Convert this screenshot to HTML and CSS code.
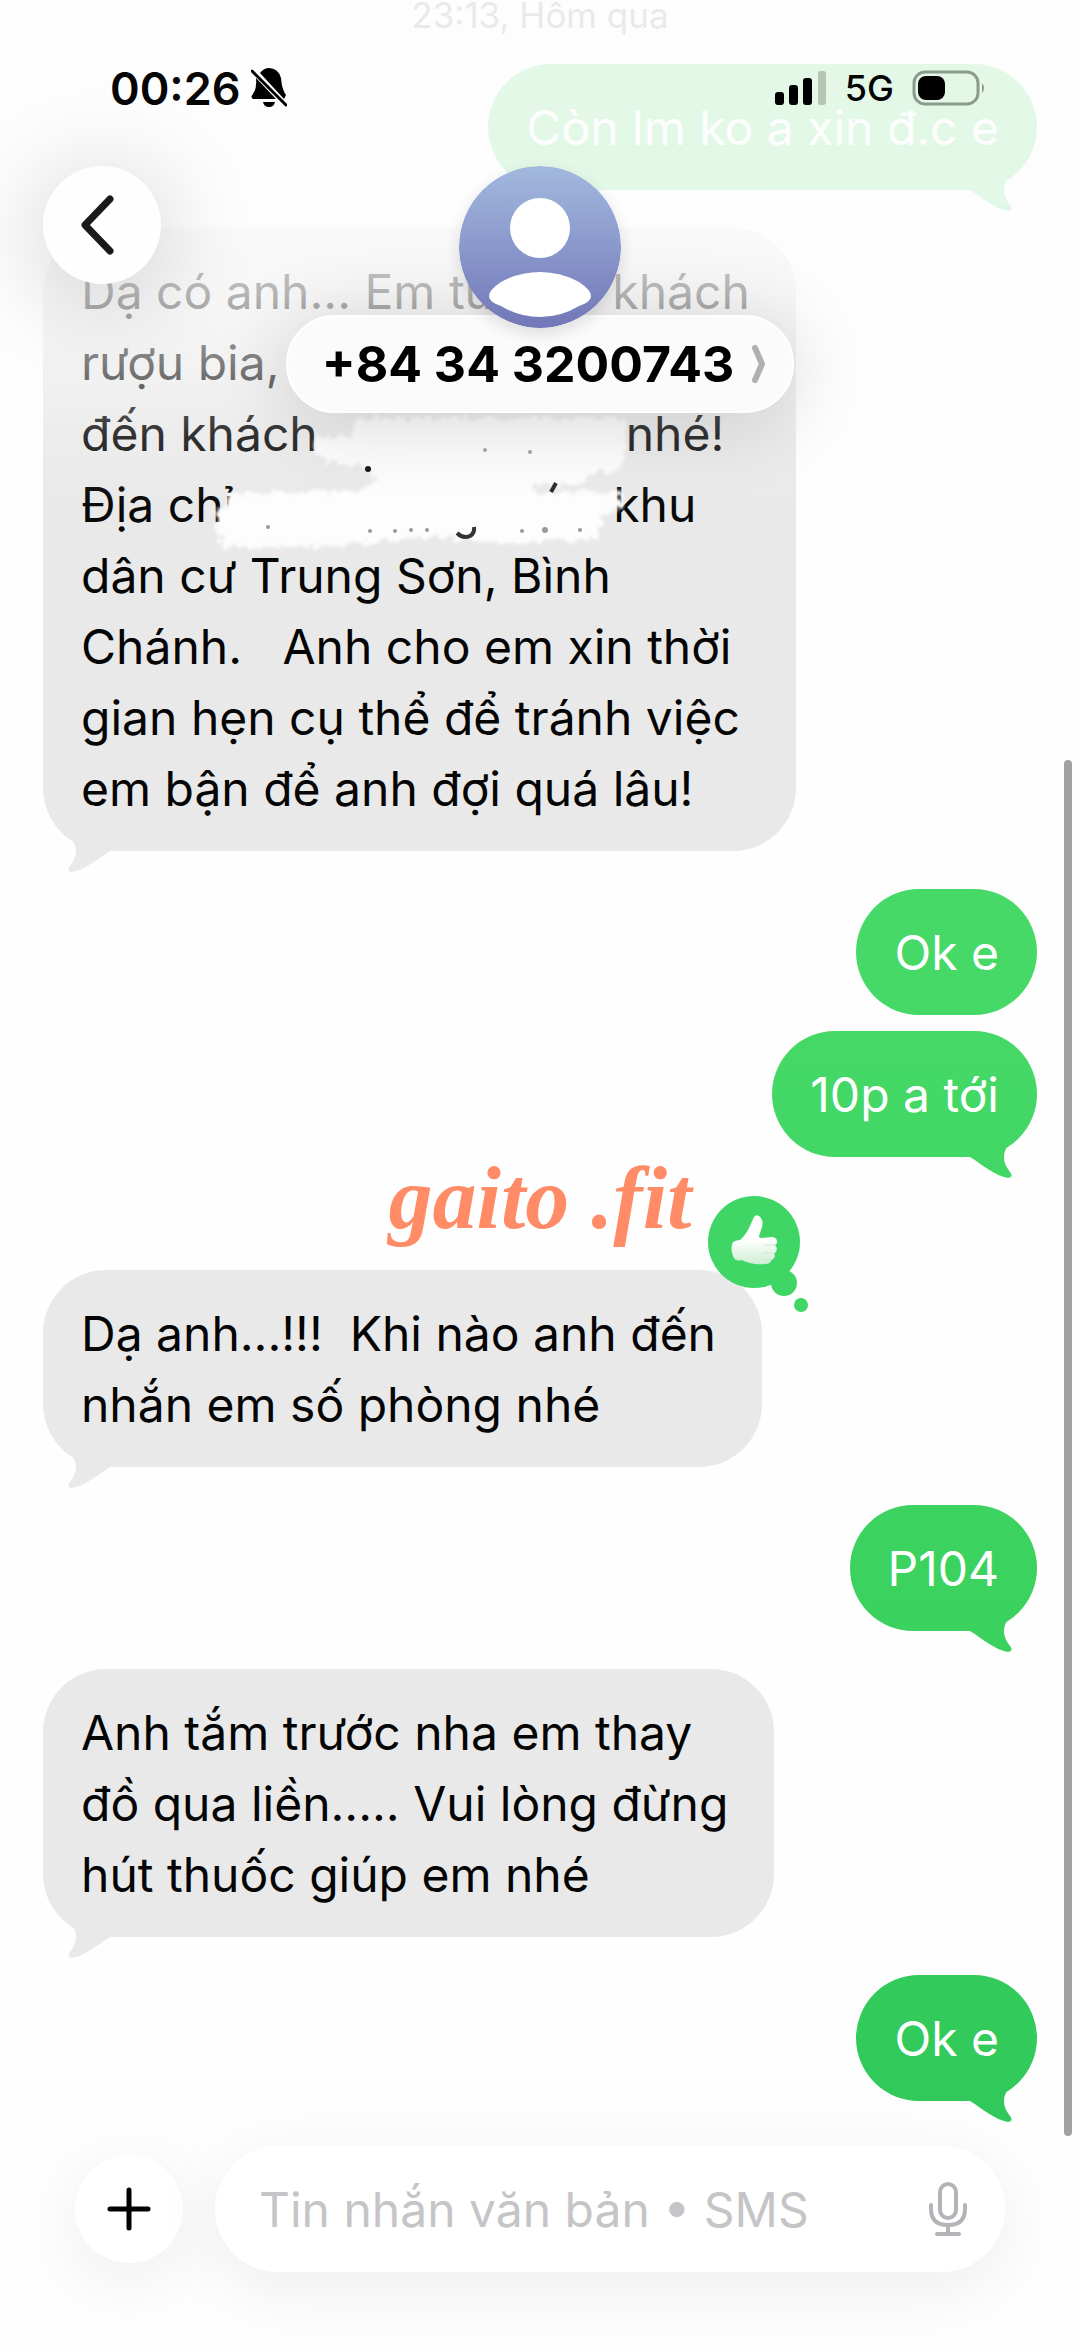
FILE: index.html
```html
<!DOCTYPE html>
<html lang="vi">
<head>
<meta charset="utf-8">
<meta name="viewport" content="width=device-width, initial-scale=1">
<title>+84 34 3200743</title>
<link rel="stylesheet" href="styles.css">
</head>
<body>
<div class="screen">
  <main class="thread">
    <p class="stamp">23:13, Hôm qua</p>
    <div class="bubble out tail">Còn lm ko a xin đ.c e</div>
    <div class="bubble in tail">Dạ có anh... Em từ<span class="gap gap-s"></span>khách
rượu bia,
đến khách<span class="gap gap-m"></span>nhé!
Địa chỉ<span class="gap gap-l"></span>khu
dân cư Trung Sơn, Bình
Chánh.   Anh cho em xin thời
gian hẹn cụ thể để tránh việc
em bận để anh đợi quá lâu!<svg class="scribble" viewBox="0 0 440 140" aria-hidden="true">
        <filter id="rough" x="-5%" y="-10%" width="110%" height="120%"><feTurbulence type="fractalNoise" baseFrequency="0.12" numOctaves="3" seed="4"/><feDisplacementMap in="SourceGraphic" scale="16" xChannelSelector="R" yChannelSelector="G"/><feGaussianBlur stdDeviation="1.5"/></filter>
        <g filter="url(#rough)" fill="#fdfdfd">
          <path d="M152 4H412Q426 8 420 26Q426 44 412 58H384L378 70H330V78H412L422 92L398 100L394 126H330L300 130L230 122L130 132L20 134L12 112L8 96L18 92L26 80L150 78L172 68L164 54L120 48L108 34L112 24L146 20Z"/>
        </g>
        <path d="M252 119q6 6 13 3q5-3 4-9" fill="none" stroke="#333" stroke-width="4"/>
        <path d="M346 78l5-9" fill="none" stroke="#222" stroke-width="4"/>
        <circle cx="163" cy="55" r="3"/>
        <g fill="#999"><circle cx="63" cy="113" r="2"/><circle cx="165" cy="117" r="2"/><circle cx="190" cy="117" r="2"/><circle cx="206" cy="116" r="2"/><circle cx="222" cy="116" r="2"/><circle cx="317" cy="117" r="2"/><circle cx="340" cy="116" r="3"/><circle cx="375" cy="116" r="2"/><circle cx="280" cy="36" r="2"/><circle cx="325" cy="38" r="2"/></g>
      </svg></div>
    <div class="group">
      <div class="bubble out">Ok e</div>
      <div class="bubble out tail">10p a tới</div>
    </div>
    <p class="brand">gaito .fit</p>
    <div class="bubble in tail">Dạ anh...!!!  Khi nào anh đến
nhắn em số phòng nhé<svg class="reaction" viewBox="0 0 110 124" role="img" aria-label="Thích">
        <defs><linearGradient id="hand" x1="0" y1="0" x2="0" y2="1"><stop offset=".5" stop-color="#fff"/><stop offset="1" stop-color="#cdeed3"/></linearGradient></defs>
        <g fill="#40d666"><circle cx="50" cy="50" r="46"/><circle cx="80" cy="91" r="13"/><circle cx="97" cy="113" r="7"/></g>
        <path fill="url(#hand)" d="M50 25q2-3 5-1q5 4 3 11l-3 9q0 2 3 2l10-1q6 1 5 6q-1 2-2 2q3 3 1 7q-1 1-2 1q2 4-1 6q-1 1-2 1q0 4-6 4q-9 1-15-1q-5-1-8-3q-7 2-9-4q-3-8 0-14q4-2 7-2q5-4 9-12z"/>
        <g fill="none" stroke="#cfe9d3" stroke-width="1"><path d="M60 53h11M59 61h12M58 68h10"/></g>
      </svg></div>
    <div class="bubble out tail">P104</div>
    <div class="bubble in tail">Anh tắm trước nha em thay
đồ qua liền..... Vui lòng đừng
hút thuốc giúp em nhé</div>
    <div class="bubble out tail">Ok e</div>
  </main>

  <form class="composer">
    <button class="plus" type="button" aria-label="Thêm"><svg viewBox="0 0 44 44"><path d="M22 3v38M3 22h38"/></svg></button>
    <div class="field">
      <input type="text" aria-label="Tin nhắn văn bản" placeholder="Tin nhắn văn bản • SMS">
      <button class="mic" type="button" aria-label="Ghi âm"><svg viewBox="0 0 40 56"><rect x="12" y="3" width="16" height="34" rx="8"/><path d="M3 24v4q0 16 17 16t17-16v-4M20 44v9M9 53h22"/></svg></button>
    </div>
  </form>

  <div class="veil"></div>

  <header class="top">
    <div class="status">
      <div class="status-left">
        <span class="clock">00:26</span>
        <svg class="bell" viewBox="0 0 36 40" aria-label="Im lặng"><path d="M9 5q4-5 9-5q9 0 12 10q1 12 5 17L33 31z"/><path d="M5 10L25 31H2q-3-2 0-5q4-5 3-16zM12 34h12q-1 5-6 5t-6-5z"/><path d="M1 3L35 37" fill="none" stroke="#000" stroke-width="3" stroke-linecap="round"/></svg>
      </div>
      <div class="status-right">
        <svg class="signal" viewBox="0 0 52 34" aria-label="Sóng"><rect y="21" width="9" height="13" rx="3"/><rect x="14" y="14" width="9" height="20" rx="3"/><rect x="28" y="7" width="9" height="27" rx="3"/><rect x="43" width="8" height="34" rx="3" fill="#b5c6b7"/></svg>
        <span class="net">5G</span>
        <svg class="battery" viewBox="0 0 74 36" aria-label="Pin"><rect x="2" y="2" width="64" height="32" rx="11" fill="none" stroke="#8c9b8e" stroke-width="3"/><rect x="6" y="6" width="27" height="24" rx="8"/><path d="M70 13q4 5 0 10z" fill="#8c9b8e"/></svg>
      </div>
    </div>
    <div class="bar">
      <button class="back" type="button" aria-label="Quay lại"><svg viewBox="0 0 36 60"><path d="M31 4L6 30L31 56"/></svg></button>
      <div class="contact">
        <svg class="avatar" viewBox="0 0 162 162" aria-hidden="true">
          <defs><linearGradient id="sky" x1="0" y1="0" x2="0" y2="1"><stop offset="0" stop-color="#a2b9de"/><stop offset="1" stop-color="#7277b8"/></linearGradient></defs>
          <circle cx="81" cy="81" r="81" fill="url(#sky)"/>
          <circle cx="81" cy="62" r="30" fill="#fff"/>
          <path d="M30 130Q30 124 42 116Q60 106 81 106T120 116Q132 124 132 130T120 140Q102 151 81 151T42 140Q30 136 30 130z" fill="#fff"/>
        </svg>
        <button class="name" type="button">+84 34 3200743<svg viewBox="0 0 18 38" aria-hidden="true"><path d="M5 3L12 19L5 35"/></svg></button>
      </div>
    </div>
  </header>
  <div class="scrollbar"></div>
</div>
</body>
</html>
```
FILE: styles.css
```css
* { box-sizing: border-box; }

body {
  margin: 0;
  background: #fefefe;
  color: #050505;
  font-family: Inter, "Noto Sans", sans-serif;
  font-size: 48px;
  line-height: 71px;
}

button, input { font: inherit; border: 0; padding: 0; margin: 0; }
button { display: flex; align-items: center; justify-content: center; cursor: pointer; }
svg { display: block; }

.screen {
  position: relative;
  display: flex;
  flex-direction: column;
  min-height: 100vh;
  overflow: hidden;
}

/* conversation */
.thread {
  display: flex;
  flex-direction: column;
  gap: 38px;
  padding: 0 43px;
}

.stamp {
  margin: 0 0 -4px;
  font-size: 35px;
  line-height: 30px;
  text-align: center;
  color: #777;
}

.bubble {
  position: relative;
  border-radius: 63px;
  padding: 28px 38px 27px;
  white-space: pre-wrap;
}

.in {
  align-self: flex-start;
  padding-right: 46px;
  background: #e9e9e9;
}

.out {
  align-self: flex-end;
  color: #fff;
  background: linear-gradient(#4fdc6a, #46d968 40%, #3cd25f 67%, #31ca5b 87%, #2fc558) fixed;
}

.tail::after {
  content: "";
  position: absolute;
  right: 14px;
  bottom: -22px;
  width: 60px;
  height: 50px;
  background: inherit;
  clip-path: path("M7 0V28C20 36 32 47 45 49Q51 48 47 43C41 35 38 27 45 16Q52 9 58 4L50 0Z");
}

.in.tail::after {
  right: auto;
  left: 14px;
  transform: scaleX(-1);
}

.group {
  display: flex;
  flex-direction: column;
  gap: 16px;
}

/* words that are hidden from view */
.gap { display: inline-block; }
.gap-s { width: 118px; }
.gap-m { width: 308px; }
.gap-l { width: 378px; }

.scribble {
  position: absolute;
  left: 162px;
  top: 186px;
  width: 440px;
  height: 140px;
}

.reaction {
  position: absolute;
  top: -78px;
  right: -52px;
  width: 110px;
  height: 124px;
}

.brand {
  margin: -36px 0 -7px;
  font: italic 700 88px/80px "Liberation Serif", serif;
  text-align: center;
  color: #ff8c66;
}

/* message box */
.composer {
  display: flex;
  align-items: center;
  gap: 32px;
  margin-top: auto;
  padding: 44px 75px 76px;
}

.plus, .field {
  background: #fff;
  box-shadow: 0 16px 72px rgba(0, 0, 0, .07);
}

.plus {
  flex: none;
  width: 108px;
  height: 108px;
  border-radius: 50%;
}
.plus svg { width: 44px; height: 44px; fill: none; stroke: #000; stroke-width: 5; stroke-linecap: round; }

.field {
  flex: 1;
  min-width: 0;
  display: flex;
  align-items: center;
  height: 126px;
  padding: 0 37px 0 44px;
  border-radius: 63px;
}
.field input { flex: 1; min-width: 0; background: none; outline: 0; color: #050505; }
.field input::placeholder { color: #c5c5c7; opacity: 1; }
.mic { flex: none; background: none; }
.mic svg { width: 40px; height: 56px; fill: none; stroke: #b4b4b8; stroke-width: 4; stroke-linecap: round; }

.veil {
  position: absolute;
  inset: 0 0 auto;
  height: 540px;
  background: linear-gradient(
    rgba(253, 253, 253, .85),
    rgba(253, 253, 253, .85) 200px,
    rgba(253, 253, 253, .72) 290px,
    rgba(253, 253, 253, .48) 365px,
    rgba(253, 253, 253, .18) 435px,
    rgba(253, 253, 253, .02) 505px,
    rgba(253, 253, 253, 0));
}

.top {
  position: absolute;
  inset: 0 0 auto;
}

.status {
  display: flex;
  justify-content: space-between;
  height: 166px;
  padding: 0 94px 0 110px;
}
.status-left, .status-right { display: flex; align-items: center; height: 176px; }
.status-left { gap: 10px; }
.clock { font-size: 45px; font-weight: 600; }
.bell { width: 36px; height: 40px; }
.signal { width: 52px; height: 34px; }
.net { margin: 0 18px; font-size: 36px; font-weight: 500; }
.battery { width: 74px; height: 36px; }

.bar {
  display: grid;
  grid-template-columns: 1fr auto 1fr;
  align-items: start;
  padding: 0 43px;
}

.back {
  width: 118px;
  height: 118px;
  border-radius: 50%;
  background: #fefefe;
  box-shadow: 0 12px 100px rgba(0, 0, 0, .2);
}
.back svg { width: 36px; height: 60px; margin-right: 10px; fill: none; stroke: #1a1a1a; stroke-width: 7; stroke-linecap: round; stroke-linejoin: round; }

.contact { display: flex; flex-direction: column; align-items: center; }
.avatar { position: relative; z-index: 1; width: 162px; height: 162px; border-radius: 50%; box-shadow: 0 6px 16px rgba(0, 0, 0, .12); }
.name {
  gap: 16px;
  height: 98px;
  margin-top: -13px;
  padding: 0 24px 0 34px;
  border: 2px solid #fff;
  border-radius: 49px;
  background: #fbfbfb;
  box-shadow: 0 8px 80px rgba(0, 0, 0, .16);
  font-size: 50px;
  font-weight: 700;
  color: #000;
  white-space: nowrap;
}
.name svg { width: 18px; height: 38px; fill: none; stroke: #b0b0b0; stroke-width: 6; stroke-linecap: round; stroke-linejoin: round; }

.scrollbar {
  position: absolute;
  top: 760px;
  right: 8px;
  bottom: 212px;
  width: 8px;
  border-radius: 4px;
  background: #a2a2a2;
}
```
